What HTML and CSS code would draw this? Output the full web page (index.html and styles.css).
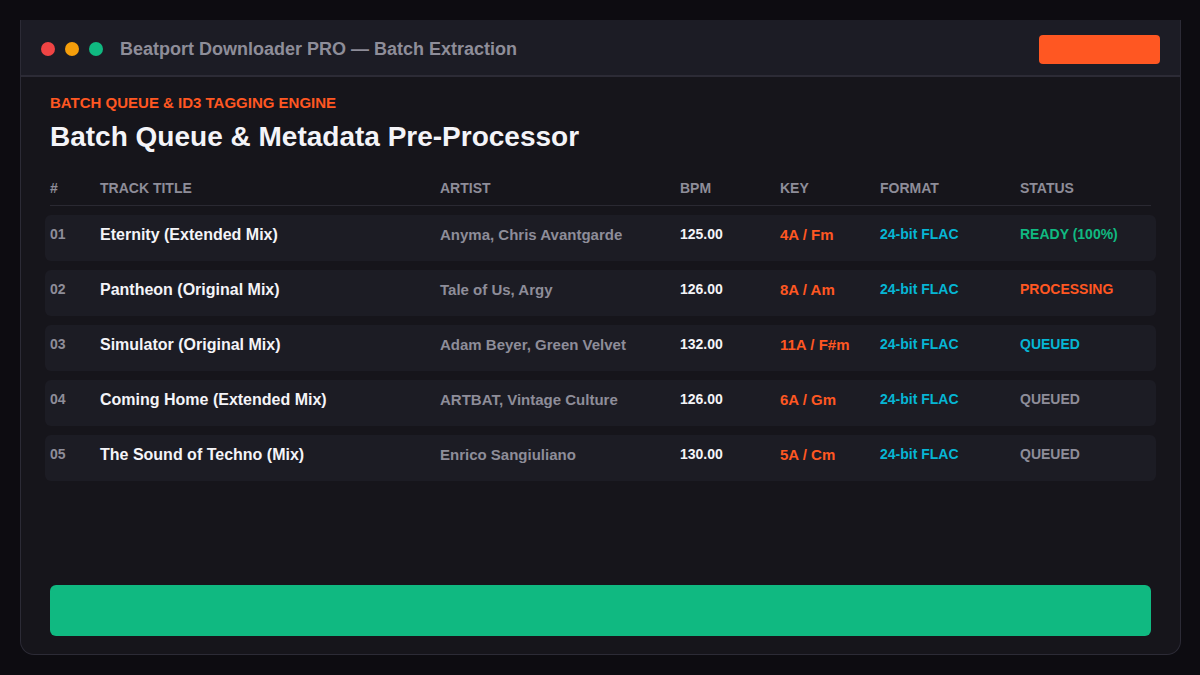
FILE: index.html
```html
<!DOCTYPE html>
<html lang="en">
<head>
    <meta charset="UTF-8">
    <meta name="viewport" content="width=device-width, initial-scale=1.0">
    <title>Beatport Downloader PRO - Batch Extraction</title>
    <link rel="stylesheet" href="styles.css">
</head>
<body>
    <div class="window">
        <div class="titlebar">
            <div class="lights">
                <span class="light red"></span>
                <span class="light yellow"></span>
                <span class="light green"></span>
            </div>
            <div class="app-title">Beatport Downloader PRO — Batch Extraction</div>
            <button class="top-action"></button>
        </div>
        <div class="content">
            <div class="eyebrow">BATCH QUEUE &amp; ID3 TAGGING ENGINE</div>
            <h1>Batch Queue &amp; Metadata Pre-Processor</h1>

            <div class="table-head">
                <div>#</div>
                <div>TRACK TITLE</div>
                <div>ARTIST</div>
                <div>BPM</div>
                <div>KEY</div>
                <div>FORMAT</div>
                <div>STATUS</div>
            </div>

            <div class="track">
                <div class="num">01</div>
                <div class="name">Eternity (Extended Mix)</div>
                <div class="artist">Anyma, Chris Avantgarde</div>
                <div class="bpm">125.00</div>
                <div class="key">4A / Fm</div>
                <div class="format">24-bit FLAC</div>
                <div class="status ready">READY (100%)</div>
            </div>
            <div class="track">
                <div class="num">02</div>
                <div class="name">Pantheon (Original Mix)</div>
                <div class="artist">Tale of Us, Argy</div>
                <div class="bpm">126.00</div>
                <div class="key">8A / Am</div>
                <div class="format">24-bit FLAC</div>
                <div class="status processing">PROCESSING</div>
            </div>
            <div class="track">
                <div class="num">03</div>
                <div class="name">Simulator (Original Mix)</div>
                <div class="artist">Adam Beyer, Green Velvet</div>
                <div class="bpm">132.00</div>
                <div class="key">11A / F#m</div>
                <div class="format">24-bit FLAC</div>
                <div class="status queued-next">QUEUED</div>
            </div>
            <div class="track">
                <div class="num">04</div>
                <div class="name">Coming Home (Extended Mix)</div>
                <div class="artist">ARTBAT, Vintage Culture</div>
                <div class="bpm">126.00</div>
                <div class="key">6A / Gm</div>
                <div class="format">24-bit FLAC</div>
                <div class="status queued">QUEUED</div>
            </div>
            <div class="track">
                <div class="num">05</div>
                <div class="name">The Sound of Techno (Mix)</div>
                <div class="artist">Enrico Sangiuliano</div>
                <div class="bpm">130.00</div>
                <div class="key">5A / Cm</div>
                <div class="format">24-bit FLAC</div>
                <div class="status queued">QUEUED</div>
            </div>

            <button class="start-btn"></button>
        </div>
    </div>
</body>
</html>
```

FILE: styles.css
```css
/* General Styles */
body {
    background: #0d0c11;
    font-family: "Liberation Sans", Arial, sans-serif;
    margin: 0;
    padding: 20px;
}

.window {
    width: 1161px;
    height: 635px;
    box-sizing: border-box;
    background: #16151b;
    border: 1px solid #2c2b36;
    border-top: none;
    border-radius: 0 0 14px 14px;
    display: flex;
    flex-direction: column;
    overflow: hidden;
}

.titlebar {
    box-sizing: border-box;
    height: 57px;
    background: #1c1c25;
    border-bottom: 2px solid #2c2b36;
    display: flex;
    align-items: center;
    padding: 3px 20px 0;
    flex-shrink: 0;
}

.lights {
    display: flex;
    gap: 10px;
    margin-right: 17px;
}

.light {
    width: 14px;
    height: 14px;
    border-radius: 50%;
}

.light.red { background: #ef4444; }
.light.yellow { background: #f59e0b; }
.light.green { background: #10b981; }

.app-title {
    color: #8e8d99;
    font-size: 18px;
    font-weight: bold;
    flex: 1;
}

.top-action {
    width: 121px;
    height: 29px;
    background: #ff5722;
    border: none;
    border-radius: 4px;
}

.content {
    flex: 1;
    display: flex;
    flex-direction: column;
    padding: 17px 29px 18px 29px;
}

.eyebrow {
    color: #ff5722;
    font-size: 15px;
    font-weight: bold;
    line-height: 17px;
}

h1 {
    color: #f4f4f8;
    font-size: 28px;
    line-height: 30px;
    margin: 11px 0 28px;
}

.table-head,
.track {
    display: grid;
    grid-template-columns: 50px 340px 240px 100px 100px 140px 1fr;
    align-items: center;
}

.table-head {
    color: #8e8d99;
    font-size: 14px;
    font-weight: bold;
    line-height: 16px;
    padding-bottom: 9px;
    border-bottom: 1px solid #2a2932;
    margin-bottom: 9px;
}

.track {
    background: #1c1c24;
    border-radius: 6px;
    margin: 0 -5px 9px;
    padding: 11px 5px 18px;
    font-size: 15px;
    font-weight: bold;
    line-height: 17px;
}

.num { color: #8e8d99; font-size: 14px; }
.name { color: #f4f4f8; font-size: 16px; }
.artist { color: #8e8d99; }
.bpm { color: #f4f4f8; font-size: 14px; }
.key { color: #ff5722; }
.format { color: #06b6d4; font-size: 14px; }
.status { font-size: 14px; }
.status.ready { color: #10b981; }
.status.processing { color: #ff5722; }
.status.queued-next { color: #06b6d4; }
.status.queued { color: #8e8d99; }

.start-btn {
    margin-top: auto;
    height: 51px;
    width: 100%;
    background: #10b981;
    border: none;
    border-radius: 6px;
}
```
